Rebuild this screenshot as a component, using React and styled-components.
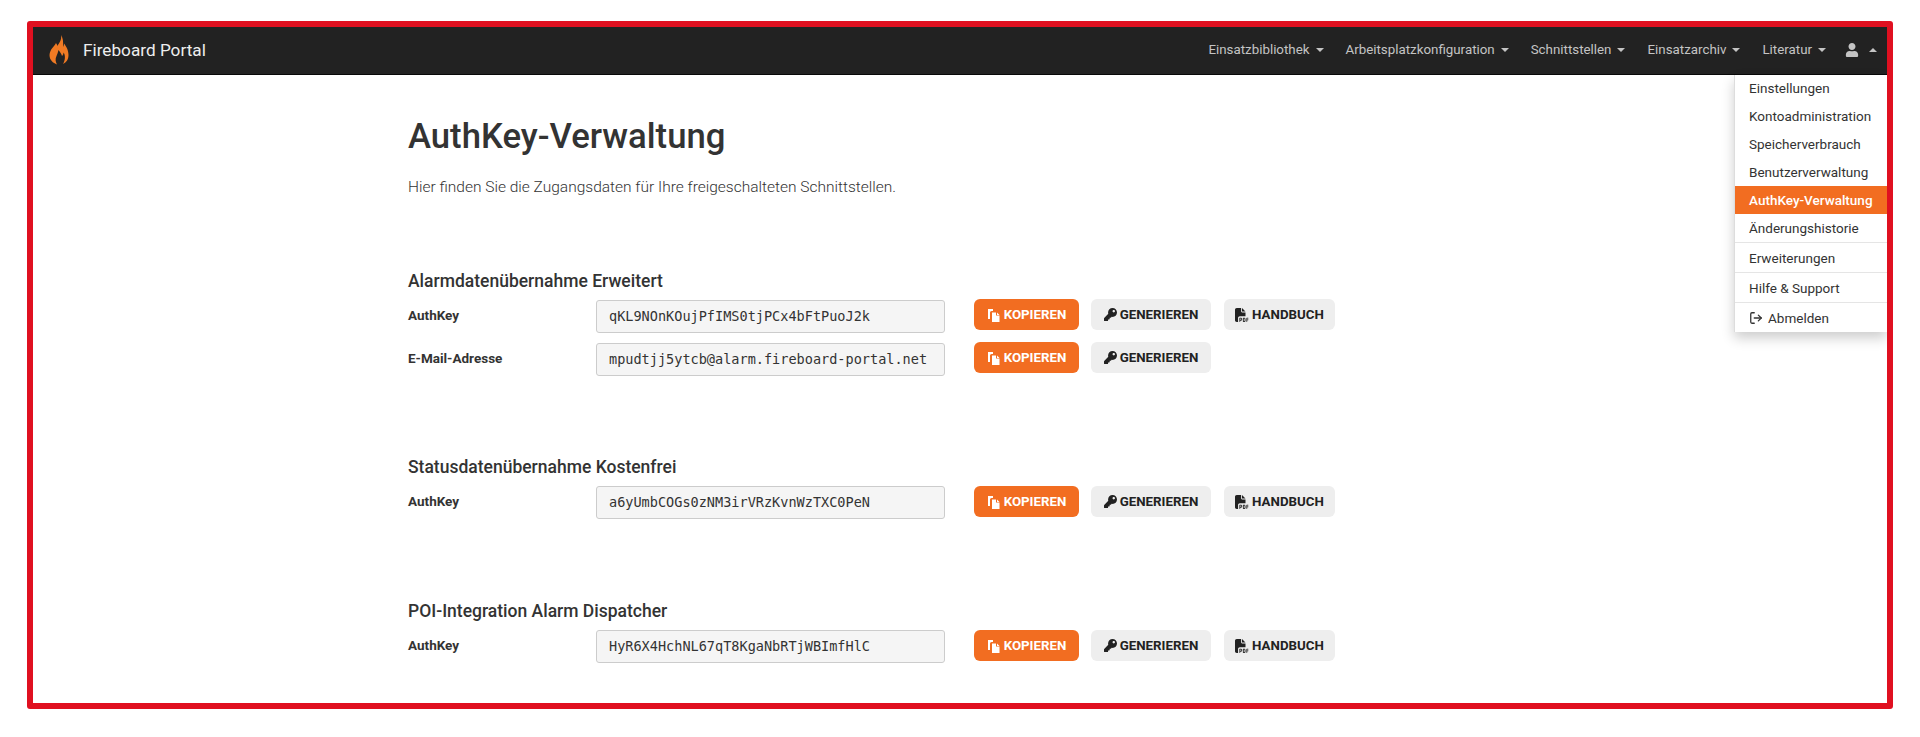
import React from "react";
import styled, { createGlobalStyle } from "styled-components";
import { FaKey, FaUser } from "react-icons/fa";
import { FaFilePdf } from "react-icons/fa6";
import { LogOut } from "lucide-react";

const Global = createGlobalStyle`
  html, body { margin: 0; padding: 0; background: #fff; }
  body { font-family: Roboto, "Liberation Sans", sans-serif; color: #333; }
`;
const Frame = styled.div`
  box-sizing: border-box; position: relative; width: 1866px; height: 688px; margin: 21px 0 0 27px;
  border: 6px solid #e01020; border-radius: 3px; background: #fff; overflow: hidden;
`;
const Navbar = styled.nav`
  box-sizing: border-box; height: 48px; background: #222; border-bottom: 1px solid #080808;
  display: flex; align-items: center; justify-content: space-between; padding: 0 10px 2px 16px;
`;
const Brand = styled.div`display: flex; align-items: center; gap: 14px; color: #eee; font-size: 17.2px;`;
const NavItems = styled.div`display: flex; align-items: center; gap: 22px;`;
const NavItem = styled.div`display: flex; align-items: center; gap: 6px; color: #c4c4c4; font-size: 13.33px;`;
const UserItem = styled(NavItem)`gap: 10px; margin-left: -3px;`;
const Caret = styled.span`
  width: 0; height: 0; border-left: 4px solid transparent; border-right: 4px solid transparent;
  ${p => p.$up ? "border-bottom: 4px solid #c4c4c4;" : "border-top: 4px solid #c4c4c4;"}
`;
const Menu = styled.div`
  position: absolute; top: 48px; right: 0; width: 152px; background: #fff; border-left: 1px solid #ddd;
  box-shadow: 0 6px 12px rgba(0,0,0,.2); font-size: 13.5px; color: #333;
`;
const MenuItem = styled.div`
  height: 28px; display: flex; align-items: center; gap: 5px; padding-left: 14px;
  &:first-child { height: 27px; padding-bottom: 1px; box-sizing: border-box; }
  ${p => p.$active && "background: #f26d21; color: #fff; font-weight: 500;"}
  ${p => p.$tall && "height: 29px;"}
`;
const Divider = styled.div`height: 1px; background: #e5e5e5; margin: 0;`;
const Content = styled.main`padding: 0 0 0 375px; width: 1100px;`;
const Title = styled.h1`margin: 39px 0 0; font-size: 34.7px; line-height: 44px; font-weight: 500; color: #333;`;
const Lead = styled.p`margin: 19px 0 0; font-size: 15.5px; line-height: 20px; font-weight: 300;`;
const Section = styled.section`margin-top: ${p => p.$top}px;`;
const SectionTitle = styled.h2`margin: 0 0 7px; font-size: 17.5px; line-height: 24px; font-weight: 500;`;
const Row = styled.div`display: flex; align-items: center; height: 33px; margin-bottom: 10px;`;
const Label = styled.div`width: 188px; font-size: 13.5px; font-weight: 700; padding-bottom: 3px;`;
const KeyField = styled.div`
  box-sizing: border-box; width: 349px; height: 33px; background: #f5f5f5; border: 1px solid #ccc; border-radius: 3px;
  font: 13.55px/31px "DejaVu Sans Mono", monospace; color: #333; padding-left: 12px; white-space: nowrap; margin-right: 29px;
`;
const Btn = styled.div`
  box-sizing: border-box; height: 31px; width: ${p => p.$w}px; margin: ${p => p.$raised ? -1 : 0}px ${p => p.$mr || 0}px 0 0; align-self: flex-start; border-radius: 6px;
  display: flex; align-items: center; justify-content: center; gap: 3px; font-size: 13.3px; font-weight: 700;
  background: ${p => p.$primary ? "#f26d21" : "#eee"}; color: ${p => p.$primary ? "#fff" : "#222"};
`;

const Flame = () => (
  <svg width="20" height="30" viewBox="0 0 20 30">
    <path fill="#f07a24" d="M12 0C13 5 10 8 8.500 11C8 9.500 7.500 9 7 8C5 12 1 14 .5 20C.5 25 4 28 8 29.500C6.500 27 6 24 7.500 21C8.500 19 9 17 9.500 15C11 17 12.500 19 13 21C14 20 14.500 19 14.500 17.500C16.500 20 16.500 25 14 29C17.500 27.500 19.500 24 19.500 20C19.500 15 17 11 15 8.500C15 10 14.500 11 14 12C14.500 7 14 3 12 0Z" />
  </svg>
);
const CopyIcon = () => (
  <svg width="14" height="14" viewBox="0 0 14 14" fill="currentColor">
    <path d="M1 1h5v2H4.500A1.500 1.500 0 0 0 3 4.500V11H1z" />
    <path d="M5 4.500h4v3h3.500V14H5z" />
    <path d="M10 4.500L12.500 7H10z" />
  </svg>
);
const navs = ["Einsatzbibliothek", "Arbeitsplatzkonfiguration", "Schnittstellen", "Einsatzarchiv", "Literatur"];
const Actions = ({ manual = true, raised = false }) => (
  <>
    <Btn $primary $raised={raised} $w={105} $mr={12}><CopyIcon />KOPIEREN</Btn>
    <Btn $raised={raised} $w={120} $mr={13}><FaKey size={13} />GENERIEREN</Btn>
    {manual && <Btn $raised={raised} $w={111}><FaFilePdf size={14} />HANDBUCH</Btn>}
  </>
);
export default function App() {
  return (
    <Frame>
      <Global />
      <Navbar>
        <Brand><Flame />Fireboard Portal</Brand>
        <NavItems>
          {navs.map(n => <NavItem key={n}>{n}<Caret /></NavItem>)}
          <UserItem><FaUser size={14} /><Caret $up /></UserItem>
        </NavItems>
      </Navbar>
      <Menu>
        <MenuItem>Einstellungen</MenuItem>
        <MenuItem>Kontoadministration</MenuItem>
        <MenuItem>Speicherverbrauch</MenuItem>
        <MenuItem>Benutzerverwaltung</MenuItem>
        <MenuItem $active>AuthKey-Verwaltung</MenuItem>
        <MenuItem>Änderungshistorie</MenuItem>
        <Divider />
        <MenuItem $tall>Erweiterungen</MenuItem>
        <Divider />
        <MenuItem $tall>Hilfe &amp; Support</MenuItem>
        <Divider />
        <MenuItem $tall><LogOut size={14} strokeWidth={2.2} />Abmelden</MenuItem>
      </Menu>
      <Content>
        <Title>AuthKey-Verwaltung</Title>
        <Lead>Hier finden Sie die Zugangsdaten für Ihre freigeschalteten Schnittstellen.</Lead>
        <Section $top={72}>
          <SectionTitle>Alarmdatenübernahme Erweitert</SectionTitle>
          <Row><Label>AuthKey</Label><KeyField>qKL9NOnKOujPfIMS0tjPCx4bFtPuoJ2k</KeyField><Actions raised /></Row>
          <Row><Label>E-Mail-Adresse</Label><KeyField>mpudtjj5ytcb@alarm.fireboard-portal.net</KeyField><Actions manual={false} raised /></Row>
        </Section>
        <Section $top={79}>
          <SectionTitle>Statusdatenübernahme Kostenfrei</SectionTitle>
          <Row><Label>AuthKey</Label><KeyField>a6yUmbCOGs0zNM3irVRzKvnWzTXC0PeN</KeyField><Actions /></Row>
        </Section>
        <Section $top={80}>
          <SectionTitle>POI-Integration Alarm Dispatcher</SectionTitle>
          <Row><Label>AuthKey</Label><KeyField>HyR6X4HchNL67qT8KgaNbRTjWBImfHlC</KeyField><Actions /></Row>
        </Section>
      </Content>
    </Frame>
  );
}
